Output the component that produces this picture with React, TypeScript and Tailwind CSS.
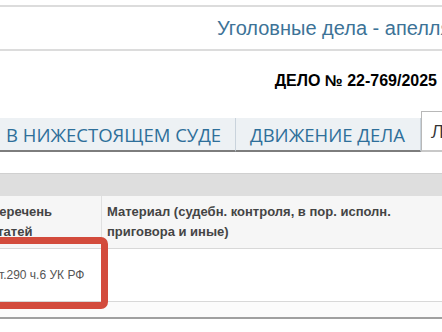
const tabs = [
  { label: 'В НИЖЕСТОЯЩЕМ СУДЕ', w: 'w-[236px]', pad: 'pl-[6px]' },
  { label: 'ДВИЖЕНИЕ ДЕЛА', w: 'w-[185px]', pad: 'pl-[14px]' },
];

export default function App() {
  return (
    <div className="relative h-[332px] w-[442px] overflow-hidden bg-white font-['Liberation_Sans',Arial,sans-serif]">
      <div className="h-[5px]" />
      {/* title bar */}
      <div className="flex h-[46px] items-center border-y-2 border-[#dcdcdc] pl-[217px] whitespace-nowrap">
        <span className="text-[20px] text-[#3d7397]">Уголовные дела - апелляция</span>
      </div>

      {/* case number */}
      <div className="flex h-[60px] items-center justify-end pr-[5px]">
        <span className="text-[16px] font-bold text-black">ДЕЛО № 22-769/2025</span>
      </div>

      {/* tabs */}
      <div className="flex h-[41px] items-end whitespace-nowrap font-['Open_Sans',sans-serif]">
        {tabs.map((t) => (
          <div
            key={t.label}
            className={`flex h-[34px] shrink-0 items-center border-r border-[#c9d3dc] border-b-2 border-b-[#7d7d7d] bg-[#edf1f4] pt-[2px] text-[18.5px] text-[#2e6f9a] ${t.w} ${t.pad}`}
          >
            {t.label}
          </div>
        ))}
        <div className="flex h-[41px] min-w-0 flex-1 items-center overflow-hidden border-l border-t border-[#b8b8b8] border-b-2 border-b-[#c8c8c8] bg-white pl-[9px] text-[18.5px] text-[#333]">
          ЛИЦА
        </div>
      </div>

      <div className="h-[21px]" />
      <div className="h-[23px] border-t border-[#d0d0d0] bg-[#dedede]" />

      {/* table */}
      <div className="-ml-[11px]">
        <div className="flex h-[53px] border-b border-[#d8d8d8] bg-[#f6f6f6] text-[13px] font-bold leading-[20px] text-[#444]">
          <div className="w-[113px] shrink-0 border-r border-[#e0e0e0] pl-[1px] pr-[10px] pt-[6px]">Перечень статей</div>
          <div className="flex-1 px-[5px] pt-[6px]">
            Материал (судебн. контроля, в пор. исполн. приговора и иные)
          </div>
        </div>
        <div className="flex h-[53px] items-center border-b border-[#d8d8d8] bg-white text-[12px] text-[#555]">
          <div className="w-[113px] shrink-0 pl-[4px] whitespace-nowrap">ст.290 ч.6 УК РФ</div>
          <div className="flex-1" />
        </div>
        <div className="h-[17px] border-b-2 border-[#a0a0a0] bg-[#fbfbfb]" />
      </div>

      {/* annotation */}
      <div className="absolute left-[-12px] top-[237px] h-[72px] w-[120px] rounded-[7px] border-[7px] border-[#d34b3c]" />
    </div>
  );
}
